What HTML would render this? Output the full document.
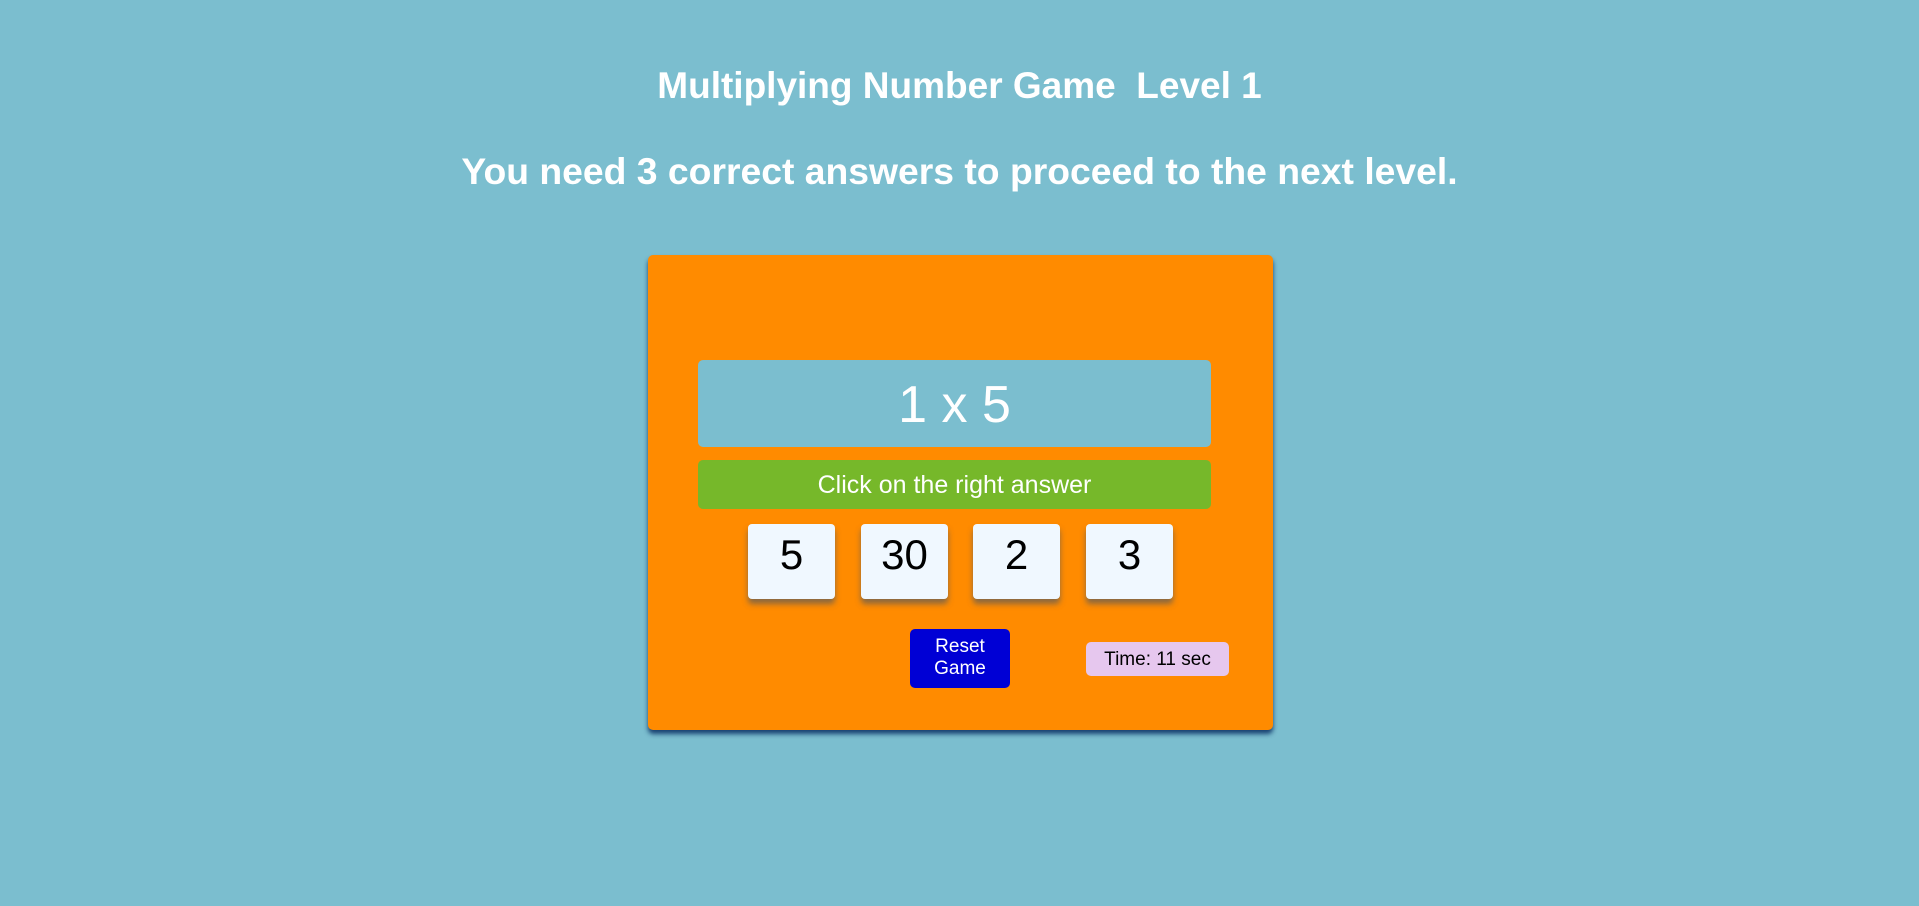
<!DOCTYPE html>
<html><head><style>
body{margin:0;width:1919px;height:906px;background:#7bbecf;font-family:"Liberation Sans",Arial,sans-serif;position:relative;overflow:hidden}
.t{position:absolute;left:0;width:1919px;text-align:center;color:#fff;font-weight:bold}
.card{position:absolute;left:648px;top:255px;width:625px;height:475px;background:#ff8b00;border-radius:5px;box-shadow:0 4px 5px rgba(20,60,110,.95)}
.q{position:absolute;left:698px;top:360px;width:513px;height:87px;background:#7bbecf;border-radius:5px;color:#fff;font-size:52px;text-align:center;line-height:90px}
.g{position:absolute;left:698px;top:460px;width:513px;height:49px;background:#76b82a;border-radius:5px;color:#fff;font-size:25px;text-align:center;line-height:50px}
.tile{position:absolute;top:524px;width:87px;height:75px;background:#f0f8ff;border-radius:4px;box-shadow:0 5px 6px rgba(90,90,90,.7);font-size:42px;text-align:center;line-height:62px;color:#000}
.r{position:absolute;left:910px;top:629px;width:100px;height:59px;background:#0000d5;border-radius:5px;color:#fff;font-size:19px;text-align:center;line-height:22px;box-sizing:border-box;padding-top:7px}
.tm{position:absolute;left:1086px;top:642px;width:143px;height:34px;background:#e6c7ee;border-radius:5px;font-size:19px;text-align:center;line-height:36px;color:#000}
</style></head><body>
<div class="t" style="top:65px;font-size:37px">Multiplying Number Game&nbsp; Level 1</div>
<div class="t" style="top:150px;font-size:37.3px">You need 3 correct answers to proceed to the next level.</div>
<div class="card"></div>
<div class="q">1 x 5</div>
<div class="g">Click on the right answer</div>
<div class="tile" style="left:748px">5</div>
<div class="tile" style="left:861px">30</div>
<div class="tile" style="left:973px">2</div>
<div class="tile" style="left:1086px">3</div>
<div class="r">Reset<br>Game</div>
<div class="tm">Time: 11 sec</div>
</body></html>
